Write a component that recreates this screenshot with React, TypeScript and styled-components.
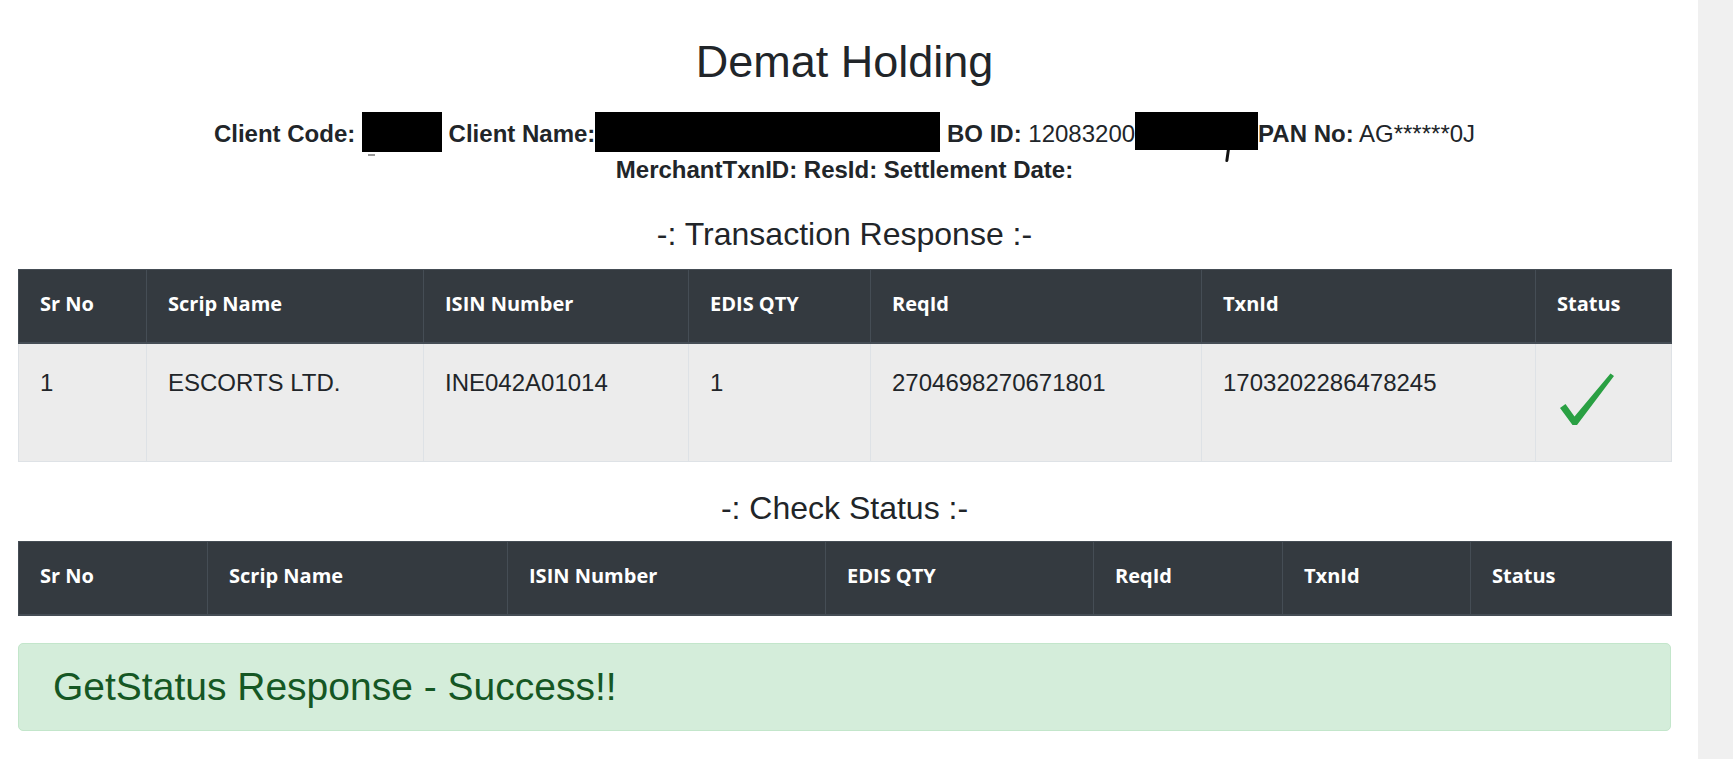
import React from "react";
import styled, { createGlobalStyle } from "styled-components";

///// DATA
type Row = {
  srNo: string;
  scrip: string;
  isin: string;
  qty: string;
  reqId: string;
  txnId: string;
  ok: boolean;
};

const HEADERS = ["Sr No", "Scrip Name", "ISIN Number", "EDIS QTY", "ReqId", "TxnId", "Status"];

const TXN_WIDTHS = [128, 277, 265, 182, 331, 334, 136];
const CHECK_WIDTHS = [189, 300, 318, 268, 189, 188, 201];

const TXN_ROWS: Row[] = [
  {
    srNo: "1",
    scrip: "ESCORTS LTD.",
    isin: "INE042A01014",
    qty: "1",
    reqId: "2704698270671801",
    txnId: "1703202286478245",
    ok: true,
  },
];
////////////

const GlobalStyle = createGlobalStyle`
  html, body {
    margin: 0;
    padding: 0;
    background: #fff;
  }
  body {
    font-family: "Liberation Sans", Arial, Helvetica, sans-serif;
    color: #212529;
  }
`;

const Page = styled.div`
  display: flex;
  min-height: 100vh;
`;

const Main = styled.main`
  flex: 1;
  padding: 35px 27px 0 18px;
  min-width: 0;
`;

const ScrollTrack = styled.div`
  width: 35px;
  flex: none;
  background: #f0f0f0;
`;

const Title = styled.h1`
  margin: 0 0 27px;
  text-align: center;
  font-size: 45px;
  font-weight: 400;
  line-height: 54px;
  color: #212529;
`;

const InfoLine = styled.div`
  text-align: center;
  font-size: 24px;
  line-height: 36px;
  white-space: nowrap;
`;

const Label = styled.b`
  font-weight: 700;
`;

const Redacted = styled.span<{ $w: number; $h?: number; $tail?: "dot" | "hook" }>`
  position: relative;
  display: inline-block;
  vertical-align: bottom;
  width: ${p => p.$w}px;
  height: ${p => p.$h ?? 40}px;
  margin-top: -4px;
  margin-bottom: ${p => 40 - (p.$h ?? 40)}px;
  background: #000;
  &::after {
    content: "";
    position: absolute;
    display: ${p => (p.$tail ? "block" : "none")};
    ${p =>
      p.$tail === "hook"
        ? `left: 91px; top: 100%; width: 3px; height: 12px; background: #111; border-radius: 0 0 2px 2px; transform: skewX(-8deg);`
        : `left: 6px; top: 100%; margin-top: 2px; width: 7px; height: 2px; background: #9a9a9a;`}
  }
`;

const SectionHeading = styled.h4<{ $mt: number; $mb: number }>`
  margin: ${p => p.$mt}px 0 ${p => p.$mb}px;
  text-align: center;
  font-size: 32px;
  font-weight: 400;
  line-height: 38px;
  color: #212529;
`;

const Table = styled.table<{ $mb?: number }>`
  width: 100%;
  table-layout: fixed;
  border-collapse: collapse;
  margin-bottom: ${p => p.$mb ?? 0}px;
`;

const Col = styled.col<{ $w: number }>`
  width: ${p => p.$w}px;
`;

const Th = styled.th`
  background: #343a40;
  color: #fff;
  font-family: "Open Sans", Roboto, "Liberation Sans", Arial, sans-serif;
  font-weight: 700;
  font-size: 20px;
  line-height: 30px;
  text-align: left;
  padding: 19px 21px 23px;
  border: 1px solid #454d55;
  border-bottom-width: 2px;
  vertical-align: bottom;
`;

const Td = styled.td`
  background: #ececec;
  font-size: 24px;
  line-height: 36px;
  padding: 21px 21px 20px;
  border: 1px solid #dee2e6;
  vertical-align: top;
  color: #212529;
`;

const Tick = styled.svg`
  display: block;
  width: 58px;
  height: 76px;
`;

const Alert = styled.div`
  padding: 20px 34px;
  border: 1px solid #c3e6cb;
  border-radius: 5px;
  background: #d4edda;
  color: #155724;
  font-size: 39px;
  line-height: 46px;
`;

function CheckMark() {
  return (
    <Tick viewBox="0 0 58 76">
      <path
        d="M3 43 L8.5 39 L17.5 51.5 L53.5 8.5 L57 11 L20 60 L15.5 60 Z"
        fill="#2aa043"
      />
    </Tick>
  );
}

function DataTable({
  widths,
  rows,
  mb,
}: {
  widths: number[];
  rows: Row[];
  mb?: number;
}) {
  return (
    <Table $mb={mb}>
      <colgroup>
        {widths.map((w, i) => (
          <Col key={i} $w={w} />
        ))}
      </colgroup>
      <thead>
        <tr>
          {HEADERS.map(h => (
            <Th key={h}>{h}</Th>
          ))}
        </tr>
      </thead>
      <tbody>
        {rows.map(r => (
          <tr key={r.srNo}>
            <Td>{r.srNo}</Td>
            <Td>{r.scrip}</Td>
            <Td>{r.isin}</Td>
            <Td>{r.qty}</Td>
            <Td>{r.reqId}</Td>
            <Td>{r.txnId}</Td>
            <Td>{r.ok && <CheckMark />}</Td>
          </tr>
        ))}
      </tbody>
    </Table>
  );
}

export default function App() {
  return (
    <>
      <GlobalStyle />
      <Page>
        <Main>
          <Title>Demat Holding</Title>
          <InfoLine>
            <Label>Client Code: </Label>
            <Redacted $w={80} $tail="dot" /> <Label>Client Name:</Label>
            <Redacted $w={345} /> <Label>BO ID:</Label> 12083200
            <Redacted $w={123} $h={38} $tail="hook" />
            <Label>PAN No:</Label> AG******0J
          </InfoLine>
          <InfoLine>
            <Label>MerchantTxnID: ResId: Settlement Date:</Label>
          </InfoLine>

          <SectionHeading $mt={27} $mb={16}>-: Transaction Response :-</SectionHeading>
          <DataTable widths={TXN_WIDTHS} rows={TXN_ROWS} />

          <SectionHeading $mt={27} $mb={14}>-: Check Status :-</SectionHeading>
          <DataTable widths={CHECK_WIDTHS} rows={[]} mb={27} />

          <Alert>GetStatus Response - Success!!</Alert>
        </Main>
        <ScrollTrack />
      </Page>
    </>
  );
}
